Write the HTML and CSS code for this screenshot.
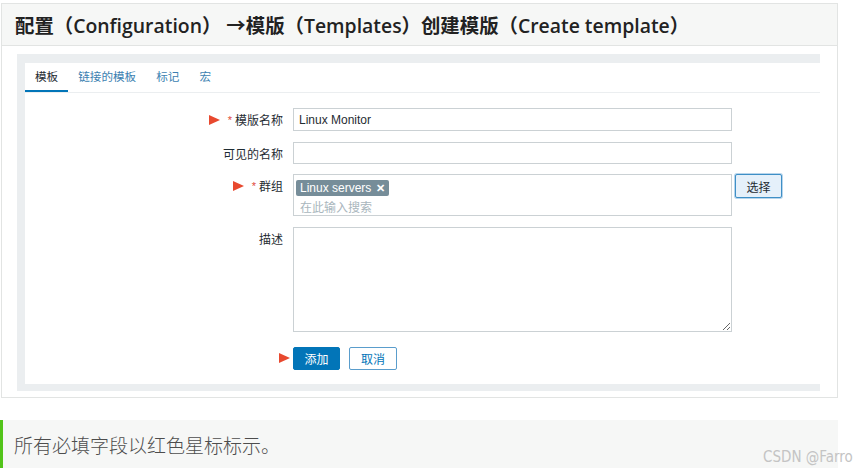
FILE: index.html
```html
<!DOCTYPE html>
<html lang="zh-CN">
<head>
    <meta charset="UTF-8">
    <title>创建模版</title>
    <link rel="stylesheet" href="styles.css">
</head>
<body>
    <!-- Doc block -->
    <div class="doc-box">
        <div class="doc-title">配置（Configuration） →模版（Templates）创建模版（Create template）</div>

        <div class="doc-body">
            <div class="shot">
                <div class="panel">
                    <div class="tabs">
                        <a href="#" class="tab active">模板</a>
                        <a href="#" class="tab">链接的模板</a>
                        <a href="#" class="tab">标记</a>
                        <a href="#" class="tab">宏</a>
                    </div>

                    <form class="form">
                        <div class="form-row">
                            <label class="form-label" for="tplName"><span class="mark"></span><span class="req">*</span>模版名称</label>
                            <input type="text" id="tplName" class="field" value="Linux Monitor">
                        </div>

                        <div class="form-row">
                            <label class="form-label" for="visibleName">可见的名称</label>
                            <input type="text" id="visibleName" class="field">
                        </div>

                        <div class="form-row">
                            <label class="form-label"><span class="mark"></span><span class="req">*</span>群组</label>
                            <div class="multiselect">
                                <span class="tag">Linux servers <span class="tag-x">✕</span></span>
                                <div class="ms-input">在此输入搜索</div>
                            </div>
                            <button type="button" class="btn-select">选择</button>
                        </div>

                        <div class="form-row">
                            <label class="form-label" for="desc">描述</label>
                            <textarea id="desc" class="field area"></textarea>
                        </div>

                        <div class="form-row actions">
                            <span></span>
                            <div class="btn-group">
                                <span class="mark mark-btn"></span>
                                <button type="submit" class="btn btn-primary">添加</button>
                                <button type="button" class="btn btn-alt">取消</button>
                            </div>
                        </div>
                    </form>
                </div>
            </div>
        </div>
    </div>

    <!-- Note -->
    <div class="note">所有必填字段以红色星标标示。</div>

    <div class="watermark">CSDN @Farro</div>
</body>
</html>
```

FILE: styles.css
```css
:root {
    --blue: #0275b8;
    --text: #1f2c33;
    --border: #cbd1d4;
    --mark: #e8492f;
}

* {
    margin: 0;
    padding: 0;
    box-sizing: border-box;
}

body {
    background-color: #fff;
    font-family: 'Liberation Sans', 'Noto Sans CJK SC', sans-serif;
    color: var(--text);
    position: relative;
    width: 865px;
    height: 473px;
    overflow: hidden;
}

.doc-box {
    width: 837px;
    margin: 3px 0 0 1px;
    border: 1px solid #e2e4e3;
}

.doc-title {
    height: 42px;
    padding-left: 13px;
    display: flex;
    align-items: center;
    background-color: #f6f7f6;
    border-bottom: 1px solid #e2e4e3;
    font-family: 'Open Sans', 'Noto Sans CJK SC', sans-serif;
    font-weight: 600;
    font-size: 19.4px;
    color: #222;
    white-space: pre;
}

.doc-body {
    padding: 8px 17px 6px 15px;
}

.shot {
    background-color: #ebeef0;
    padding: 9px 0 7px 8px;
}

.panel {
    background-color: #fff;
    height: 321px;
}

/* Tabs */
.tabs {
    display: flex;
    height: 30px;
    border-bottom: 1px solid #ebeef0;
}

.tab {
    padding: 0 10px;
    line-height: 28px;
    font-size: 11.6px;
    color: #3c7fb1;
    text-decoration: none;
    border-bottom: 2px solid transparent;
}

.tab.active {
    color: var(--text);
    border-bottom-color: var(--blue);
}

/* Form */
.form {
    padding-top: 15px;
}

.form-row {
    display: grid;
    grid-template-columns: 258px 439px auto;
    column-gap: 10px;
    align-items: start;
    margin-bottom: 11px;
}

.form-row:nth-child(2) {
    margin-bottom: 9px;
}

.form-row:nth-child(4) {
    margin-bottom: 15px;
}

.form-label {
    display: flex;
    justify-content: flex-end;
    align-items: center;
    height: 23px;
    font-size: 12px;
    color: var(--text);
}

.req {
    color: #e04a3a;
    margin-right: 3px;
    font-size: 11px;
}

.mark {
    width: 0;
    height: 0;
    border-left: 11px solid var(--mark);
    border-top: 5px solid transparent;
    border-bottom: 5px solid transparent;
    margin-right: 8px;
}

.field {
    display: block;
    width: 439px;
    height: 23px;
    padding: 0 5px;
    border: 1px solid var(--border);
    font-family: inherit;
    font-size: 12px;
    color: var(--text);
    outline: none;
}

.form-row:nth-child(2) .field {
    height: 22px;
}

.area {
    height: 105px;
    resize: vertical;
}

.multiselect {
    height: 42px;
    border: 1px solid var(--border);
    padding: 3px 2px 0;
}

.tag {
    display: inline-flex;
    align-items: center;
    gap: 5px;
    height: 16px;
    padding: 0 4px 0 4px;
    background-color: #768d99;
    color: #fff;
    font-size: 12px;
    border-radius: 2px;
}

.tag-x {
    font-size: 11px;
    font-weight: bold;
}

.ms-input {
    padding: 2px 0 0 4px;
    font-size: 12px;
    color: #a9b6bd;
}

.btn-select {
    width: 47px;
    height: 24px;
    margin-left: -7px;
    background-color: #e5f0fa;
    border: 1px solid #3e8fc6;
    box-shadow: 0 0 0 1px #b7d5ec;
    border-radius: 2px;
    font-family: inherit;
    font-size: 12px;
    color: var(--text);
}

/* Buttons */
.btn-group {
    position: relative;
    display: flex;
    gap: 9px;
}

.mark-btn {
    position: absolute;
    left: -14px;
    top: 6px;
}

.btn {
    height: 23px;
    border-radius: 2px;
    font-family: inherit;
    font-size: 12px;
    cursor: pointer;
}

.btn-primary {
    width: 47px;
    background-color: var(--blue);
    border: 1px solid var(--blue);
    color: #fff;
}

.btn-alt {
    width: 48px;
    background-color: #fff;
    border: 1px solid #5a9dcc;
    color: var(--blue);
}

/* Note */
.note {
    width: 838px;
    height: 48px;
    margin-top: 22px;
    padding-left: 11px;
    display: flex;
    align-items: center;
    background-color: #f6f7f6;
    border-left: 3px solid #52c41a;
    font-family: 'Noto Sans CJK SC', sans-serif;
    font-weight: 300;
    font-size: 19px;
    color: #4d4d4d;
}

.watermark {
    position: absolute;
    left: 763px;
    top: 448px;
    font-family: 'Liberation Sans Narrow', 'DejaVu Sans Condensed', sans-serif;
    font-size: 15px;
    color: #c4c4c4;
    white-space: nowrap;
}
```
